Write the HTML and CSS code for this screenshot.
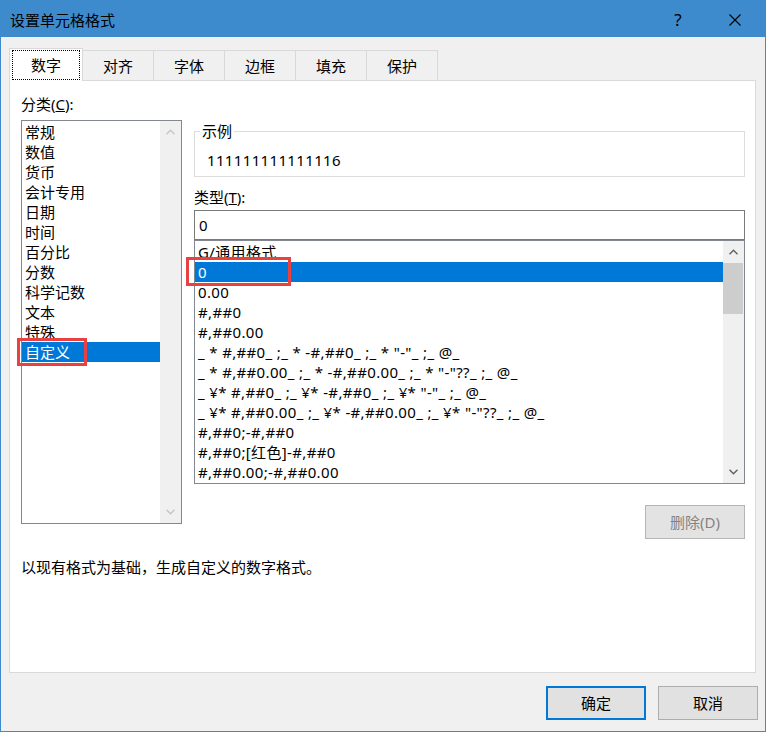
FILE: index.html
```html
<!DOCTYPE html>
<html lang="zh-CN">
<head>
<meta charset="utf-8">
<title>设置单元格格式</title>
<link rel="stylesheet" href="styles.css">
</head>
<body>
<div class="window">
  <div class="titlebar">
    <span class="title">设置单元格格式</span>
    <span class="tb-help">?</span>
    <span class="tb-close"><svg width="12" height="12" viewBox="0 0 12 12"><path d="M0.5 0.5 L11.5 11.5 M11.5 0.5 L0.5 11.5" stroke="#000" stroke-width="1.1" fill="none"/></svg></span>
  </div>
  <div class="body">
    <div class="tabs">
      <div class="tab active"><span class="focus">数字</span></div>
      <div class="tab">对齐</div>
      <div class="tab">字体</div>
      <div class="tab">边框</div>
      <div class="tab">填充</div>
      <div class="tab">保护</div>
    </div>
    <div class="panel">
      <div class="cols">
        <div class="col-left">
          <div class="label">分类(<u>C</u>):</div>
          <div class="listbox cat">
            <ul class="items">
              <li>常规</li>
              <li>数值</li>
              <li>货币</li>
              <li>会计专用</li>
              <li>日期</li>
              <li>时间</li>
              <li>百分比</li>
              <li>分数</li>
              <li>科学记数</li>
              <li>文本</li>
              <li>特殊</li>
              <li class="sel">自定义<span class="mark mark-cat"></span></li>
            </ul>
            <div class="vscroll disabled">
              <div class="sb-btn"><svg width="9" height="6" viewBox="0 0 9 6"><path d="M0.5 5.2 L4.5 1.2 L8.5 5.2" fill="none" stroke="#c6c6c6" stroke-width="1.4"/></svg></div>
              <div class="sb-track"></div>
              <div class="sb-btn"><svg width="9" height="6" viewBox="0 0 9 6"><path d="M0.5 0.8 L4.5 4.8 L8.5 0.8" fill="none" stroke="#c6c6c6" stroke-width="1.4"/></svg></div>
            </div>
          </div>
        </div>
        <div class="col-right">
          <fieldset class="sample">
            <legend>示例</legend>
            <div class="sample-value latin">111111111111116</div>
          </fieldset>
          <div class="label type-label">类型(<u>T</u>):</div>
          <div class="input latin">0</div>
          <div class="listbox fmt">
            <ul class="items latin">
              <li>G/通用格式</li>
              <li class="sel">0<span class="mark mark-fmt"></span></li>
              <li>0.00</li>
              <li>#,##0</li>
              <li>#,##0.00</li>
              <li>_ * #,##0_ ;_ * -#,##0_ ;_ * "-"_ ;_ @_</li>
              <li>_ * #,##0.00_ ;_ * -#,##0.00_ ;_ * "-"??_ ;_ @_</li>
              <li>_ ¥* #,##0_ ;_ ¥* -#,##0_ ;_ ¥* "-"_ ;_ @_</li>
              <li>_ ¥* #,##0.00_ ;_ ¥* -#,##0.00_ ;_ ¥* "-"??_ ;_ @_</li>
              <li>#,##0;-#,##0</li>
              <li>#,##0;[红色]-#,##0</li>
              <li>#,##0.00;-#,##0.00</li>
            </ul>
            <div class="vscroll">
              <div class="sb-btn"><svg width="9" height="6" viewBox="0 0 9 6"><path d="M0.5 5.2 L4.5 1.2 L8.5 5.2" fill="none" stroke="#606060" stroke-width="1.4"/></svg></div>
              <div class="sb-track"><div class="thumb"></div></div>
              <div class="sb-btn"><svg width="9" height="6" viewBox="0 0 9 6"><path d="M0.5 0.8 L4.5 4.8 L8.5 0.8" fill="none" stroke="#606060" stroke-width="1.4"/></svg></div>
            </div>
          </div>
          <div class="btn-row"><button class="btn disabled">删除(D)</button></div>
        </div>
      </div>
      <div class="desc">以现有格式为基础，生成自定义的数字格式。</div>
    </div>
    <div class="footer">
      <button class="btn default">确定</button>
      <button class="btn">取消</button>
    </div>
  </div>
</div>
</body>
</html>
```
FILE: styles.css
```css
* { box-sizing: border-box; }
html, body { margin: 0; padding: 0; }
body {
  width: 766px;
  height: 732px;
  overflow: hidden;
  font-family: "Noto Sans", "Noto Sans CJK SC", sans-serif;
  font-size: 15px;
  line-height: 20px;
  color: #000;
}
.window {
  width: 766px;
  height: 732px;
  border: 1px solid #3d8bcd;
  border-top: 0;
  background: #f0f0f0;
  display: flex;
  flex-direction: column;
}
.titlebar {
  flex: none;
  height: 37px;
  background: #3d8bcd;
  display: flex;
  align-items: center;
  padding: 2px 7px 0 9px;
}
.title { flex: 1; }
.tb-help {
  width: 46px;
  margin-right: 11px;
  text-align: center;
  font-size: 17px;
}
.tb-close {
  width: 46px;
  display: flex;
  justify-content: center;
}
.body {
  flex: 1;
  display: flex;
  flex-direction: column;
  padding: 11px 7px 0 8px;
}
.tabs {
  display: flex;
  align-items: flex-end;
  height: 32px;
}
.tab {
  width: 72px;
  height: 30px;
  margin-left: -1px;
  border: 1px solid #d9d9d9;
  border-bottom: 0;
  display: flex;
  align-items: center;
  justify-content: center;
}
.tab.active {
  margin-left: 0;
  width: 74px;
  height: 33px;
  margin-bottom: -1px;
  background: #fff;
  position: relative;
  z-index: 1;
}
.focus {
  width: 66px;
  height: 28px;
  outline: 1px dotted #000;
  display: flex;
  align-items: center;
  justify-content: center;
}
.panel {
  height: 593px;
  margin-right: 2px;
  border: 1px solid #d9d9d9;
  background: #fff;
  padding: 13px 9px 0 11px;
}
.cols { display: flex; gap: 12px; }
.col-left { width: 161px; }
.col-right { width: 551px; display: flex; flex-direction: column; }
.label { height: 20px; }
.latin { letter-spacing: 0.35px; }
.listbox {
  border: 1px solid #828790;
  background: #fff;
  display: flex;
}
.cat { margin-top: 6px; height: 404px; }
.fmt { height: 244px; }
.items {
  list-style: none;
  margin: 0;
  padding: 1px 0 0 0;
  flex: 1;
  min-width: 0;
}
.items li {
  height: 20px;
  line-height: 20px;
  padding-left: 3px;
  white-space: nowrap;
  position: relative;
}
.items li.sel { background: #0078d7; color: #fff; }
.vscroll {
  width: 21px;
  flex: none;
  background: #f0f0f0;
  display: flex;
  flex-direction: column;
}
.sb-btn {
  height: 22px;
  flex: none;
  display: flex;
  align-items: center;
  justify-content: center;
}
.sb-track { flex: 1; }
.thumb { height: 51px; margin: 0 1px 0 0; background: #cdcdcd; }
.mark {
  position: absolute;
  border: 3px solid #e8413f;
  z-index: 2;
}
.mark-cat { left: -5px; top: -4px; width: 70px; height: 28px; }
.mark-fmt { left: -9px; top: -5px; width: 105px; height: 29px; }
.sample {
  margin: 27px 0 0 0;
  padding: 9px 10px 6px 12px;
  border: 1px solid #dcdcdc;
  min-width: 0;
}
.sample legend {
  margin-left: -7px;
  padding: 0 2px;
  line-height: 20px;
}
.sample-value { height: 20px; }
.type-label { margin-top: 10px; }
.input {
  margin-top: 3px;
  height: 30px;
  border: 1px solid #7a7a7a;
  padding-left: 4px;
  display: flex;
  align-items: center;
}
.btn-row {
  margin-top: 21px;
  display: flex;
  justify-content: flex-end;
}
.btn {
  width: 100px;
  height: 34px;
  padding: 0;
  background: #e1e1e1;
  border: 1px solid #adadad;
  font: inherit;
  color: #000;
}
.btn.default { border: 2px solid #0078d7; }
.btn.disabled { color: #838383; border-color: #b5b5b5; background: #e3e3e3; }
.desc { margin-top: 18px; }
.footer {
  margin-top: 13px;
  display: flex;
  justify-content: flex-end;
  gap: 12px;
}
```
